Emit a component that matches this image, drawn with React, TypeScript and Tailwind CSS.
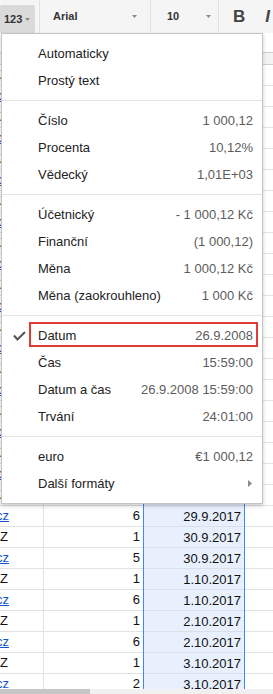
import React from "react";

type Item =
  | { sep: true }
  | { label: string; value?: string; checked?: boolean; boxed?: boolean; arrow?: boolean };

const items: Item[] = [
  { label: "Automaticky" },
  { label: "Prostý text" },
  { sep: true },
  { label: "Číslo", value: "1 000,12" },
  { label: "Procenta", value: "10,12%" },
  { label: "Vědecký", value: "1,01E+03" },
  { sep: true },
  { label: "Účetnický", value: "- 1 000,12 Kč" },
  { label: "Finanční", value: "(1 000,12)" },
  { label: "Měna", value: "1 000,12 Kč" },
  { label: "Měna (zaokrouhleno)", value: "1 000 Kč" },
  { sep: true },
  { label: "Datum", value: "26.9.2008", checked: true, boxed: true },
  { label: "Čas", value: "15:59:00" },
  { label: "Datum a čas", value: "26.9.2008 15:59:00" },
  { label: "Trvání", value: "24:01:00" },
  { sep: true },
  { label: "euro", value: "€1 000,12" },
  { label: "Další formáty", arrow: true },
];

const visibleRows: [string, string, string][] = [
  ["cz", "6", "29.9.2017"],
  ["Z", "1", "30.9.2017"],
  ["cz", "5", "30.9.2017"],
  ["Z", "1", "1.10.2017"],
  ["cz", "6", "1.10.2017"],
  ["Z", "1", "2.10.2017"],
  ["cz", "6", "2.10.2017"],
  ["Z", "1", "3.10.2017"],
  ["cz", "2", "3.10.2017"],
];

const hiddenRows: [string, string, string][] = Array.from({ length: 21 }, (_, i) => [
  i % 2 === 0 ? "Z" : "cz",
  String((i % 5) + 1),
  `${18 + Math.floor(i / 2)}.9.2017`,
]);

const rows = [...hiddenRows, ...visibleRows];

function Caret({ className = "" }: { className?: string }) {
  return (
    <svg width="5" height="3" viewBox="0 0 5 3" className={className}>
      <path d="M0 0 L5 0 L2.5 3 Z" fill="#8a8a8a" />
    </svg>
  );
}

export default function App() {
  return (
    <div className="relative w-[273px] h-[694px] overflow-hidden bg-white flex flex-col font-['Liberation_Sans',Arial,sans-serif]">
      {/* Toolbar */}
      <div className="h-[33px] shrink-0 bg-[#f5f5f5] flex items-stretch text-[#333]">
        <div className="w-[39px] pt-[5px]">
          <div className="h-[28px] w-[35px] bg-[#dadada] rounded-t-[2px] flex items-center pl-[4px] gap-[3px]">
            <span className="text-[11px] font-bold leading-none">123</span>
            <Caret />
          </div>
        </div>
        <div className="w-px bg-[#e2e2e2]" />
        <div className="w-[110px] flex items-center pl-[13px] pr-[13px]">
          <span className="text-[11px] font-bold leading-none">Arial</span>
          <Caret className="ml-auto" />
        </div>
        <div className="w-px bg-[#e2e2e2]" />
        <div className="w-[67px] flex items-center pl-[16px] pr-[7px]">
          <span className="text-[11px] font-bold leading-none">10</span>
          <Caret className="ml-auto" />
        </div>
        <div className="w-px bg-[#e2e2e2]" />
        <div className="flex-1 flex items-center pl-[14px] gap-[20px] overflow-hidden">
          <span className="text-[17px] font-bold leading-none text-[#444]">B</span>
          <span className="text-[17px] font-bold italic leading-none text-[#444]">I</span>
        </div>
      </div>

      {/* Formula bar */}
      <div className="h-[20px] shrink-0 border-b border-[#d0d0d0] bg-white" />
      {/* Column header */}
      <div className="h-[12px] shrink-0 border-b border-[#cfcfcf] bg-[#f3f3f3]" />

      {/* Grid */}
      <div className="flex-1 overflow-hidden">
        {rows.map(([a, b, c], i) => (
          <div key={i} className="h-[21px] flex text-[13px] text-[#111]">
            <div className="w-[44px] border-r border-b border-[#e2e2e2] overflow-hidden flex items-center">
              {a === "cz" ? (
                <span className="ml-[-4px] text-[#1155cc] underline">cz</span>
              ) : (
                <span className="ml-0">Z</span>
              )}
            </div>
            <div className="w-[99px] border-b border-[#e2e2e2] flex items-center justify-end pr-[3px]">
              {b}
            </div>
            <div className="w-[102px] border-x border-[#4285f4] bg-[#e8f0fe] flex items-center justify-end pr-[3px] shadow-[inset_0_-1px_0_#dadfe8]">
              {c}
            </div>
            <div className="flex-1 border-b border-[#e2e2e2]" />
          </div>
        ))}
      </div>

      {/* Horizontal scrollbar */}
      <div className="h-[5px] shrink-0 bg-[#f0f0f0] flex">
        <div className="w-[90px] bg-[#c6c6c6]" />
      </div>

      {/* Dropdown menu */}
      <div className="absolute left-[1px] top-[33px] w-[262px] bg-white border border-[#c4c4c4] shadow-[0_2px_4px_rgba(0,0,0,0.2)] py-[6px] text-[13px]">
        {items.map((it, i) =>
          "sep" in it ? (
            <div key={i} className="my-[6px] h-px bg-[#e5e5e5]" />
          ) : (
            <div key={i} className="relative h-[27px] flex items-center pr-[9px]">
              <div className="w-[36px] h-full flex items-center pl-[11px]">
                {it.checked && (
                  <svg width="13" height="10" viewBox="0 0 13 10">
                    <path d="M1 4.5 L4.5 8.5 L12 1" fill="none" stroke="#555" strokeWidth="2" />
                  </svg>
                )}
              </div>
              <span className="text-[#222] whitespace-nowrap">{it.label}</span>
              {it.value && <span className="ml-auto text-[#5c5c5c] whitespace-nowrap">{it.value}</span>}
              {it.arrow && (
                <svg width="4" height="7" viewBox="0 0 4 7" className="ml-auto mr-[1px]">
                  <path d="M0 0 L4 3.5 L0 7 Z" fill="#8a8a8a" />
                </svg>
              )}
              {it.boxed && (
                <div className="absolute left-[27px] top-0 w-[229px] h-[25px] border-2 border-[#e53935]" />
              )}
            </div>
          )
        )}
      </div>
    </div>
  );
}
